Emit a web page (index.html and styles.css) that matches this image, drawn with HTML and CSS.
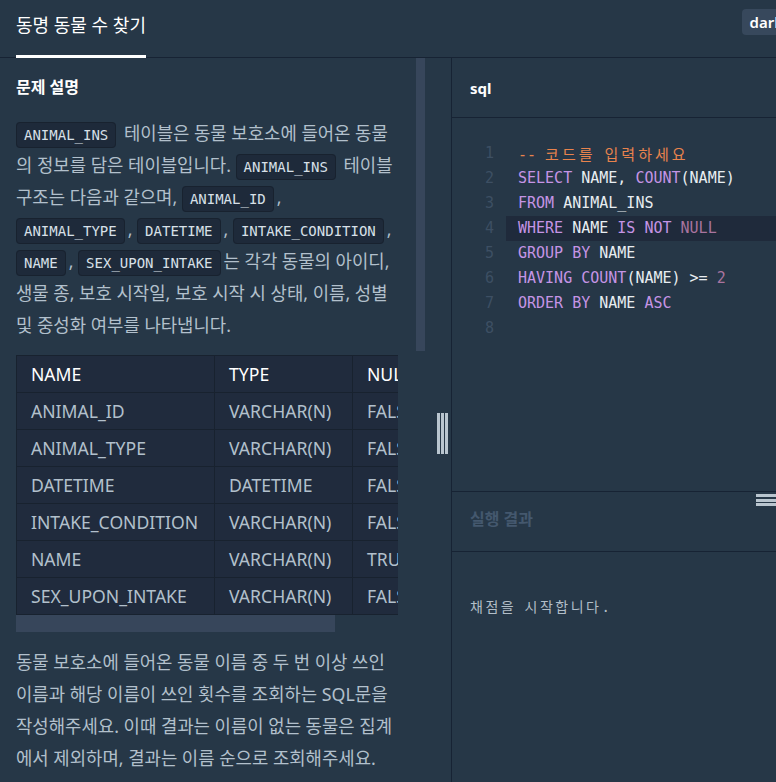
FILE: index.html
```html
<!DOCTYPE html>
<html lang="ko">
<head>
<meta charset="utf-8">
<title>동명 동물 수 찾기</title>
<link rel="stylesheet" href="styles.css">
</head>
<body>
<div class="app">
  <header class="topbar">
    <div class="tab">동명 동물 수 찾기</div>
    <button class="theme">dark</button>
  </header>
  <main class="workspace">
    <section class="problem">
      <div class="problem-scroll">
        <h2 class="section-title">문제 설명</h2>
        <p class="desc"><code class="tag">ANIMAL_INS</code> 테이블은 동물 보호소에 들어온 동물의 정보를 담은 테이블입니다. <code class="tag">ANIMAL_INS</code> 테이블 구조는 다음과 같으며, <code class="tag">ANIMAL_ID</code>, <code class="tag">ANIMAL_TYPE</code>, <code class="tag">DATETIME</code>, <code class="tag">INTAKE_CONDITION</code>, <code class="tag">NAME</code>, <code class="tag">SEX_UPON_INTAKE</code>는 각각 동물의 아이디, 생물 종, 보호 시작일, 보호 시작 시 상태, 이름, 성별 및 중성화 여부를 나타냅니다.</p>
        <div class="table-wrap">
          <table class="schema">
            <colgroup><col class="c1"><col class="c2"><col class="c3"></colgroup>
            <thead>
              <tr><th>NAME</th><th>TYPE</th><th>NULLABLE</th></tr>
            </thead>
            <tbody>
              <tr><td>ANIMAL_ID</td><td>VARCHAR(N)</td><td>FALSE</td></tr>
              <tr><td>ANIMAL_TYPE</td><td>VARCHAR(N)</td><td>FALSE</td></tr>
              <tr><td>DATETIME</td><td>DATETIME</td><td>FALSE</td></tr>
              <tr><td>INTAKE_CONDITION</td><td>VARCHAR(N)</td><td>FALSE</td></tr>
              <tr><td>NAME</td><td>VARCHAR(N)</td><td>TRUE</td></tr>
              <tr><td>SEX_UPON_INTAKE</td><td>VARCHAR(N)</td><td>FALSE</td></tr>
            </tbody>
          </table>
        </div>
        <div class="hscroll"><div class="hthumb"></div></div>
        <p class="desc desc-task">동물 보호소에 들어온 동물 이름 중 두 번 이상 쓰인 이름과 해당 이름이 쓰인 횟수를 조회하는 SQL문을 작성해주세요. 이때 결과는 이름이 없는 동물은 집계에서 제외하며, 결과는 이름 순으로 조회해주세요.</p>
      </div>
      <div class="vscroll"><div class="vthumb"></div></div>
    </section>
    <div class="gutter">
      <svg class="grip-v" width="11" height="41" viewBox="0 0 11 41"><rect x="0" y="0" width="3" height="41" fill="#b9c5cf"/><rect x="4" y="0" width="3" height="41" fill="#b9c5cf"/><rect x="8" y="0" width="3" height="41" fill="#b9c5cf"/></svg>
    </div>
    <section class="ide">
      <div class="ide-head">sql</div>
      <div class="editor">
        <div class="line"><span class="ln">1</span><span class="code"><span class="cm">-- <span class="ko">코드를</span> <span class="ko">입력하세요</span></span></span></div>
        <div class="line"><span class="ln">2</span><span class="code"><span class="kw">SELECT</span> NAME, <span class="kw">COUNT</span>(NAME)</span></div>
        <div class="line"><span class="ln">3</span><span class="code"><span class="kw">FROM</span> ANIMAL_INS</span></div>
        <div class="line active"><span class="ln">4</span><span class="code"><span class="kw">WHERE</span> NAME <span class="kw">IS NOT</span> <span class="nu">NULL</span></span></div>
        <div class="line"><span class="ln">5</span><span class="code"><span class="kw">GROUP BY</span> NAME</span></div>
        <div class="line"><span class="ln">6</span><span class="code"><span class="kw">HAVING COUNT</span>(NAME) &gt;= <span class="nu">2</span></span></div>
        <div class="line"><span class="ln">7</span><span class="code"><span class="kw">ORDER BY</span> NAME <span class="kw">ASC</span></span></div>
        <div class="line"><span class="ln">8</span><span class="code"></span></div>
      </div>
      <div class="result-head">
        <span class="result-title">실행 결과</span>
        <svg class="grip-h" width="20" height="12" viewBox="0 0 20 12"><rect x="0" y="0" width="20" height="3" fill="#b9c5cf"/><rect x="0" y="5" width="20" height="3" fill="#b9c5cf"/><rect x="0" y="9" width="20" height="3" fill="#b9c5cf"/></svg>
      </div>
      <div class="result-body"><span class="ko-out">채점을</span> <span class="ko-out">시작합니다</span>.</div>
    </section>
  </main>
</div>
</body>
</html>
```
FILE: styles.css
```css
html, body {
  margin: 0;
  padding: 0;
}
body {
  width: 776px;
  height: 782px;
  overflow: hidden;
  background: #263747;
  font-family: "Noto Sans", "Noto Sans CJK KR", sans-serif;
  color: #b2c0cc;
}
.app {
  width: 776px;
  height: 782px;
  display: flex;
  flex-direction: column;
}
.topbar {
  height: 57px;
  border-bottom: 1px solid #172334;
  display: flex;
  align-items: flex-start;
  padding-left: 16px;
  flex: none;
}
.tab {
  box-sizing: border-box;
  height: 58px;
  margin-bottom: -1px;
  padding-top: 14px;
  line-height: 22px;
  font-size: 18px;
  color: #ffffff;
  border-bottom: 3px solid #ffffff;
  white-space: nowrap;
}
.theme {
  margin-left: auto;
  margin-top: 9px;
  margin-right: -15px;
  height: 26px;
  padding: 0 8px;
  border: none;
  border-radius: 4px;
  background: #37485c;
  color: #ffffff;
  font-family: "Noto Sans", sans-serif;
  font-size: 15px;
  font-weight: 600;
}
.workspace {
  flex: 1;
  min-height: 0;
  display: grid;
  grid-template-columns: 426px 25px 1fr;
}
.problem {
  display: flex;
  overflow: hidden;
  min-width: 0;
}
.problem-scroll {
  flex: 1;
  min-width: 0;
  padding: 16px;
  overflow: hidden;
}
.section-title {
  margin: 0 0 17px;
  font-size: 16px;
  line-height: 26px;
  font-weight: 700;
  color: #ffffff;
}
.desc {
  margin: 0;
  font-size: 17.8px;
  line-height: 32px;
  color: #b2c0cc;
}
.tag {
  font-family: "DejaVu Sans Mono", monospace;
  font-size: 14px;
  line-height: 1;
  padding: 4px 7px;
  margin: 0 3px 0 0;
  border: 1px solid #18222f;
  border-radius: 4px;
  background: #1e2a3a;
  color: #d8e0e8;
}
.table-wrap {
  margin-top: 14px;
  width: 382px;
  overflow: hidden;
}
.schema {
  border-collapse: collapse;
  table-layout: fixed;
  width: 457px;
  font-family: "Noto Sans", sans-serif;
  font-size: 17.6px;
}
.schema .c1 { width: 198px; }
.schema .c2 { width: 138px; }
.schema .c3 { width: 121px; }
.schema th, .schema td {
  height: 36px;
  padding: 0 14px;
  border: 1px solid #18222f;
  background: #202b3d;
  text-align: left;
  white-space: nowrap;
  overflow: hidden;
  font-weight: 400;
}
.schema th {
  color: #ffffff;
}
.schema td {
  color: #b2c0cc;
}
.hscroll {
  width: 382px;
  height: 17px;
}
.hthumb {
  width: 319px;
  height: 17px;
  background: #37465b;
}
.desc-task {
  margin-top: 14px;
}
.vscroll {
  width: 10px;
  flex: none;
}
.vthumb {
  width: 9px;
  height: 293px;
  background: #37465b;
}
.gutter {
  padding-top: 355px;
  padding-left: 11px;
}
.grip-v {
  display: block;
}
.ide {
  border-left: 1px solid #172334;
  display: flex;
  flex-direction: column;
  min-width: 0;
}
.ide-head {
  flex: none;
  height: 59px;
  border-bottom: 1px solid #172334;
  padding-left: 18px;
  display: flex;
  align-items: center;
  font-size: 15px;
  font-weight: 700;
  color: #ffffff;
}
.editor {
  flex: none;
  box-sizing: border-box;
  height: 373px;
  padding-top: 23px;
  font-family: "DejaVu Sans Mono", "Noto Sans CJK KR", monospace;
  font-size: 15px;
  line-height: 25px;
  color: #e8edf1;
}
.line {
  display: flex;
  height: 25px;
}
.ln {
  flex: none;
  width: 54px;
  box-sizing: border-box;
  padding-right: 12px;
  text-align: right;
  color: #3d4f63;
}
.code {
  flex: 1;
  padding-left: 12px;
  white-space: pre;
}
.line.active .code {
  background: #1f2a3b;
}
.kw { color: #c594e5; }
.cm { color: #e8834d; }
.nu { color: #a9749f; }
.ko {
  font-family: "Noto Sans CJK KR", sans-serif;
  letter-spacing: 3px;
}
.result-head {
  flex: none;
  position: relative;
  height: 59px;
  border-top: 1px solid #172334;
  border-bottom: 1px solid #172334;
  padding-left: 18px;
}
.result-title {
  display: block;
  padding-top: 16px;
  line-height: 22px;
  font-size: 16px;
  font-weight: 700;
  color: #44586e;
}
.grip-h {
  position: absolute;
  top: 2px;
  right: 0;
}
.result-body {
  padding: 43px 18px;
  font-family: "DejaVu Sans Mono", "Noto Sans CJK KR", monospace;
  font-size: 14px;
  line-height: 22px;
  color: #b2bec8;
}
.ko-out {
  font-family: "Noto Sans CJK KR", sans-serif;
  letter-spacing: 2.5px;
}
```
